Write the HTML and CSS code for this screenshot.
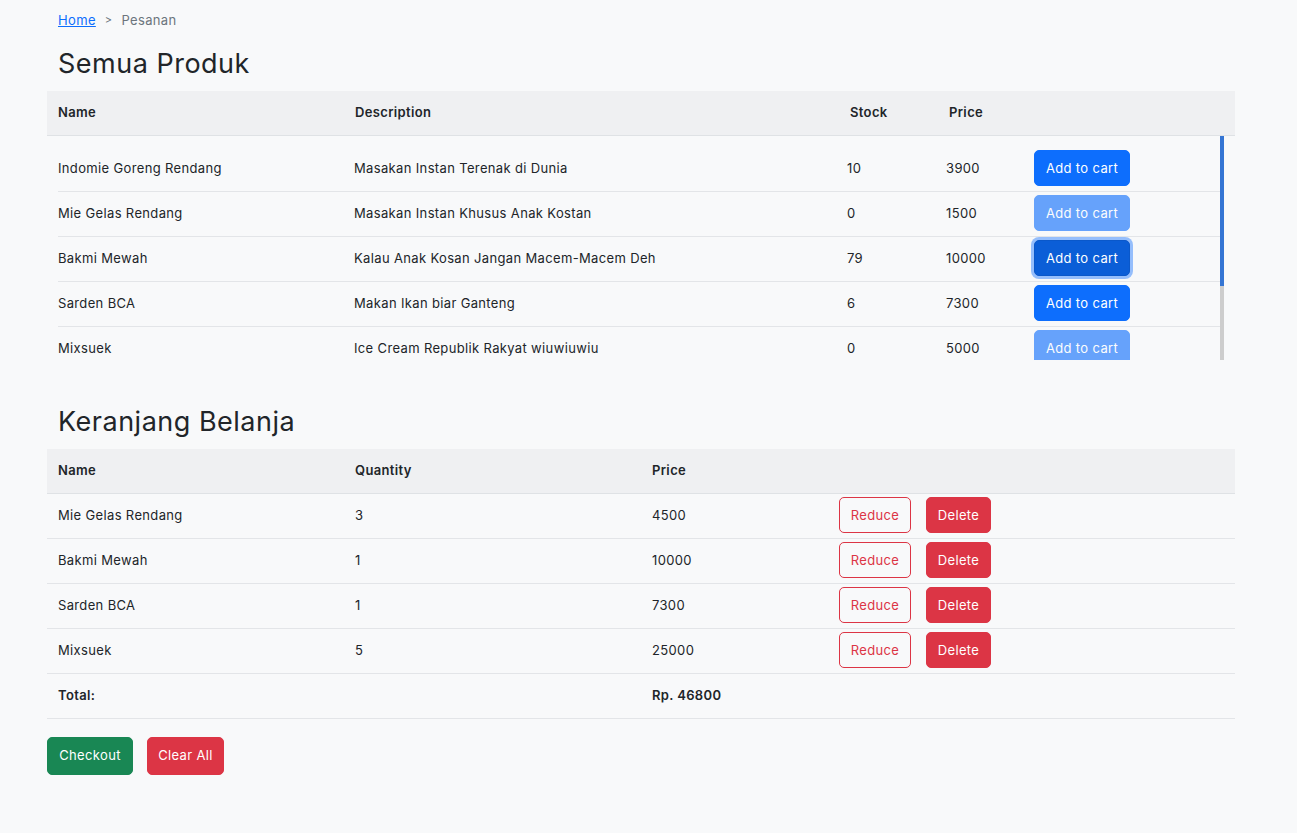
FILE: index.html
```html
<!DOCTYPE html>
<html lang="id">
<head>
<meta charset="utf-8">
<title>Pesanan</title>
<link rel="stylesheet" href="styles.css">
</head>
<body>
<main class="page">
  <nav class="breadcrumb">
    <a href="#" class="crumb-link">Home</a>
    <span class="crumb-sep">&gt;</span>
    <span class="crumb-current">Pesanan</span>
  </nav>

  <h1 class="title">Semua Produk</h1>
  <section class="products">
    <div class="prod-head">
      <div class="th">Name</div>
      <div class="th">Description</div>
      <div class="th">Stock</div>
      <div class="th">Price</div>
      <div class="th"></div>
    </div>
    <div class="prod-body">
      <div class="prod-scroll">
        <div class="prod-row">
          <div class="td">Indomie Goreng Rendang</div>
          <div class="td">Masakan Instan Terenak di Dunia</div>
          <div class="td">10</div>
          <div class="td">3900</div>
          <div class="td"><button class="btn btn-primary">Add to cart</button></div>
        </div>
        <div class="prod-row">
          <div class="td">Mie Gelas Rendang</div>
          <div class="td">Masakan Instan Khusus Anak Kostan</div>
          <div class="td">0</div>
          <div class="td">1500</div>
          <div class="td"><button class="btn btn-primary is-disabled">Add to cart</button></div>
        </div>
        <div class="prod-row">
          <div class="td">Bakmi Mewah</div>
          <div class="td">Kalau Anak Kosan Jangan Macem-Macem Deh</div>
          <div class="td">79</div>
          <div class="td">10000</div>
          <div class="td"><button class="btn btn-primary is-focused">Add to cart</button></div>
        </div>
        <div class="prod-row">
          <div class="td">Sarden BCA</div>
          <div class="td">Makan Ikan biar Ganteng</div>
          <div class="td">6</div>
          <div class="td">7300</div>
          <div class="td"><button class="btn btn-primary">Add to cart</button></div>
        </div>
        <div class="prod-row">
          <div class="td">Mixsuek</div>
          <div class="td">Ice Cream Republik Rakyat wiuwiuwiu</div>
          <div class="td">0</div>
          <div class="td">5000</div>
          <div class="td"><button class="btn btn-primary is-disabled">Add to cart</button></div>
        </div>
      </div>
      <div class="scrollbar"><div class="scrollbar-thumb"></div></div>
    </div>
  </section>

  <h1 class="title title-cart">Keranjang Belanja</h1>
  <section class="cart">
    <div class="cart-row cart-head">
      <div class="th">Name</div>
      <div class="th">Quantity</div>
      <div class="th">Price</div>
      <div class="th"></div>
    </div>
    <div class="cart-row">
      <div class="td">Mie Gelas Rendang</div>
      <div class="td">3</div>
      <div class="td">4500</div>
      <div class="td actions"><button class="btn btn-outline-danger">Reduce</button><button class="btn btn-danger">Delete</button></div>
    </div>
    <div class="cart-row">
      <div class="td">Bakmi Mewah</div>
      <div class="td">1</div>
      <div class="td">10000</div>
      <div class="td actions"><button class="btn btn-outline-danger">Reduce</button><button class="btn btn-danger">Delete</button></div>
    </div>
    <div class="cart-row">
      <div class="td">Sarden BCA</div>
      <div class="td">1</div>
      <div class="td">7300</div>
      <div class="td actions"><button class="btn btn-outline-danger">Reduce</button><button class="btn btn-danger">Delete</button></div>
    </div>
    <div class="cart-row">
      <div class="td">Mixsuek</div>
      <div class="td">5</div>
      <div class="td">25000</div>
      <div class="td actions"><button class="btn btn-outline-danger">Reduce</button><button class="btn btn-danger">Delete</button></div>
    </div>
    <div class="cart-row cart-total">
      <div class="td">Total:</div>
      <div class="td"></div>
      <div class="td">Rp. 46800</div>
      <div class="td"></div>
    </div>
  </section>

  <div class="footer-actions">
    <button class="btn btn-success btn-lg">Checkout</button>
    <button class="btn btn-danger btn-lg">Clear All</button>
  </div>
</main>
</body>
</html>
```

FILE: styles.css
```css
* { box-sizing: border-box; }

html, body {
  margin: 0;
  background: #f8f9fa;
}

body {
  font-family: "Inter", "Noto Sans", sans-serif;
  font-size: 13px;
  letter-spacing: 0.35px;
  color: #212529;
}

.page {
  width: 1188px;
  margin-left: 47px;
}

/* breadcrumb */
.breadcrumb {
  padding: 11px 11px 0;
  height: 29px;
  line-height: 18px;
  font-size: 13px;
  display: flex;
  gap: 9px;
}
.crumb-link { color: #0d6efd; text-decoration: underline; }
.crumb-sep { color: #6c757d; font-size: 11px; }
.crumb-current { color: #6c757d; }

/* titles */
.title {
  margin: 18px 0 10px;
  padding: 0 11px;
  font-size: 27px;
  font-weight: 400;
  line-height: 34px;
  letter-spacing: 0.5px;
}
.title-cart { margin-top: 45px; }

.th { font-weight: 600; }

/* products */
.prod-head {
  display: grid;
  grid-template-columns: 297px 495px 99px 1fr 0;
  height: 45px;
  padding-bottom: 2px;
  align-items: center;
  background: #eff0f2;
  border-bottom: 1px solid #dfe2e5;
}
.prod-head .th { padding-left: 11px; }

.prod-body {
  display: flex;
  width: 1177px;
  height: 224px;
}

.prod-scroll {
  flex: 1;
  overflow: hidden;
  padding-top: 11px;
}

.scrollbar {
  width: 4px;
  height: 100%;
  background: #cdcdcd;
  display: flex;
  flex-direction: column;
}
.scrollbar-thumb {
  height: 150px;
  background: #3575d3;
}

.prod-row {
  margin-left: 11px;
  display: grid;
  grid-template-columns: 296px 493px 99px 88px 1fr;
  height: 45px;
  padding-bottom: 3px;
  align-items: center;
  border-bottom: 1px solid #e3e5e8;
}
.prod-row:last-child { border-bottom: none; }

/* buttons */
.btn {
  font-family: inherit;
  font-size: 13px;
  letter-spacing: 0.35px;
  line-height: 20px;
  border: 1px solid transparent;
  border-radius: 5px;
  padding: 7px 0;
  cursor: pointer;
  color: #fff;
  text-align: center;
}
.btn-primary { background: #0d6efd; border-color: #0d6efd; width: 96px; }
.btn-primary.is-disabled { opacity: 0.62; }
.btn-primary.is-focused {
  background: #0b5ed7;
  border-color: #0a58ca;
  box-shadow: 0 0 0 3px rgba(49, 132, 253, 0.5);
}
.btn-danger { background: #dc3545; border-color: #dc3545; }
.btn-outline-danger { background: transparent; color: #dc3545; border-color: #dc3545; }
.btn-success { background: #198754; border-color: #198754; }

/* cart */
.cart-row {
  display: grid;
  grid-template-columns: 297px 297px 187px 1fr;
  height: 45px;
  padding-bottom: 2px;
  align-items: center;
  border-bottom: 1px solid #e3e5e8;
}
.cart-row .td, .cart-row .th { padding-left: 11px; }
.cart-head { background: #eff0f2; border-bottom-color: #dfe2e5; }
.cart-row .actions { display: flex; gap: 15px; }
.cart-row .actions .btn-outline-danger { width: 72px; }
.cart-row .actions .btn-danger { width: 65px; }
.cart-total { font-weight: 600; }

.footer-actions {
  display: flex;
  gap: 14px;
  margin-top: 18px;
}
.btn-lg { padding: 7px 0 9px; height: 38px; }
.btn-success.btn-lg { width: 86px; }
.btn-danger.btn-lg { width: 77px; }
```
